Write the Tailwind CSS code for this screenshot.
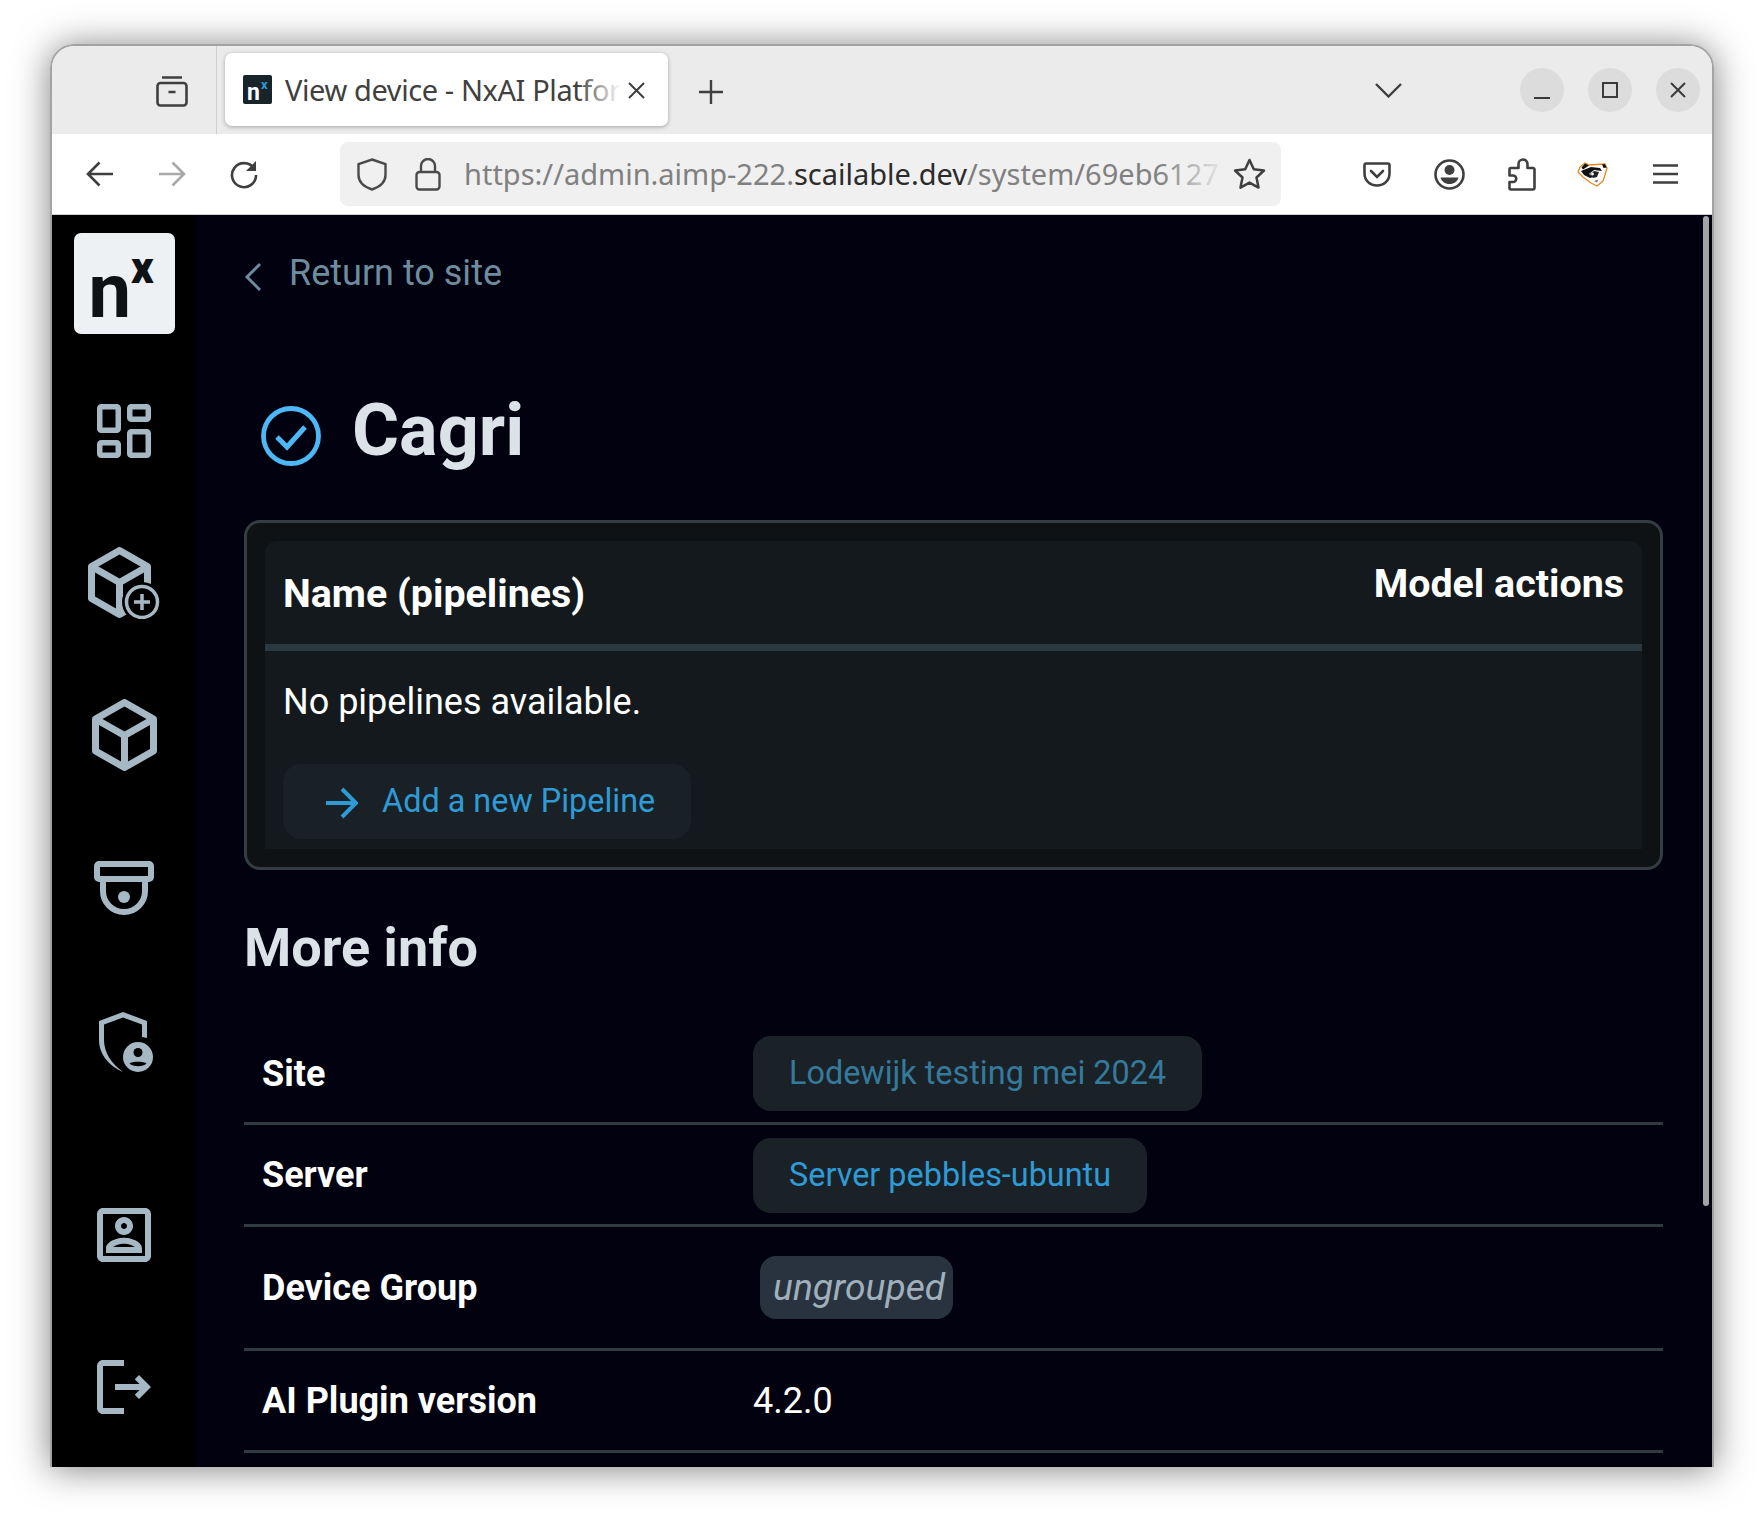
<!DOCTYPE html>
<html lang="en">
<head>
    <meta charset="UTF-8">
    <meta name="viewport" content="width=device-width, initial-scale=1.0">
    <title>View device - NxAI Platform</title>
    <script src="https://cdn.jsdelivr.net/npm/@tailwindcss/browser@4"></script>
</head>
<body class="bg-white h-[1524px] overflow-hidden pt-[44px] pl-[50px]">
    <div class="w-[1664px] h-[1423px] rounded-t-[24px] overflow-hidden flex flex-col border-x-2 border-t-2 border-[#a3a3a3] shadow-[0_2px_36px_rgba(0,0,0,0.5)]">

        <!-- tab strip -->
        <div class="h-[88px] shrink-0 bg-[#ebebeb] flex items-start font-['Noto_Sans',sans-serif] text-[#3d3d3d]">
            <div class="w-[165px] h-full shrink-0 border-r border-[#cfcfcf] pl-[104px] pt-[29px]">
                <svg class="w-[32px] h-[32px]" viewBox="0 0 32 32" fill="none" stroke="#3f3f3f" stroke-width="2.6">
                    <path d="M6 2.5h20"></path>
                    <rect x="1.5" y="8" width="29" height="22.5" rx="3"></rect>
                    <path d="M12.5 17h7"></path>
                </svg>
            </div>
            <div class="relative w-[443px] h-[73px] mt-[7px] ml-[8px] shrink-0 bg-white rounded-[7px] shadow-[0_1px_4px_rgba(0,0,0,0.3)] flex items-center pl-[18px]">
                <div class="w-[29px] h-[29px] shrink-0 rounded-[2px] bg-[#17252b] relative font-['Roboto',sans-serif] font-bold leading-none">
                    <span class="absolute left-[4px] top-[6px] text-[23px] text-white">n</span>
                    <span class="absolute left-[18px] top-[3px] text-[13px] text-[#2e9bd6]">x</span>
                </div>
                <span class="ml-[13px] whitespace-nowrap text-[29px] text-[#404040] tracking-[-0.4px]">View device - NxAI Platfor</span>
                <div class="absolute left-[352px] top-[10px] w-[44px] h-[50px] bg-gradient-to-r from-white/0 to-white"></div>
                <svg class="absolute left-[403px] top-[29px] w-[17px] h-[17px]" viewBox="0 0 17 17" stroke="#3f3f3f" stroke-width="2"><path d="M1 1l15 15M16 1L1 16"></path></svg>
            </div>
            <svg class="ml-[31px] mt-[34px] w-[24px] h-[24px] shrink-0" viewBox="0 0 24 24" stroke="#3f3f3f" stroke-width="2.4"><path d="M12 0v24M0 12h24"></path></svg>
            <svg class="ml-[652px] mt-[37px] w-[27px] h-[15px] shrink-0" viewBox="0 0 27 15" fill="none" stroke="#3f3f3f" stroke-width="2.4"><path d="M1 1l12.5 12.5L26 1"></path></svg>
            <div class="ml-[118px] mt-[22px] flex gap-[24px] shrink-0">
                <div class="w-[44px] h-[44px] rounded-full bg-[#dcdcdc] flex items-center justify-center">
                    <div class="w-[16px] h-[2px] mt-[15px] bg-[#3a3a3a]"></div>
                </div>
                <div class="w-[44px] h-[44px] rounded-full bg-[#dcdcdc] flex items-center justify-center">
                    <div class="w-[16px] h-[16px] border-2 border-[#3a3a3a]"></div>
                </div>
                <div class="w-[44px] h-[44px] rounded-full bg-[#dcdcdc] flex items-center justify-center">
                    <svg class="w-[16px] h-[16px]" viewBox="0 0 16 16" stroke="#3a3a3a" stroke-width="2"><path d="M1 1l14 14M15 1L1 15"></path></svg>
                </div>
            </div>
        </div>

        <!-- toolbar -->
        <div class="h-[81px] shrink-0 bg-white border-b border-[#cfcfcf] flex items-center font-['Noto_Sans',sans-serif]">
            <svg class="ml-[34px] w-[28px] h-[26px] shrink-0" viewBox="0 0 28 26" fill="none" stroke="#3f3f3f" stroke-width="2.6"><path d="M27 13H3M13.5 1.5L2 13l11.5 11.5"></path></svg>
            <svg class="ml-[43px] w-[30px] h-[26px] shrink-0" viewBox="0 0 28 26" fill="none" stroke="#a9a9a9" stroke-width="2.6"><path d="M1 13h24M14.5 1.5L26 13 14.5 24.5"></path></svg>
            <svg class="ml-[42px] w-[30px] h-[30px] shrink-0" viewBox="0 0 30 30" fill="none" stroke="#3f3f3f" stroke-width="2.6"><path d="M25 9.5A12 12 0 1 0 27 16"></path><path d="M27 2v10H17z" fill="#3f3f3f" stroke="none"></path></svg>
            <div class="relative ml-[81px] w-[941px] h-[64px] shrink-0 bg-[#f0f0f0] rounded-[8px] flex items-center">
                <svg class="ml-[17px] w-[30px] h-[33px] shrink-0" viewBox="0 0 30 33" fill="none" stroke="#4a4a4a" stroke-width="2.4"><path d="M15 1.5L28.5 6v11c0 7-6 12-13.500 14.500C7.500 29 1.500 24 1.500 17V6z"></path></svg>
                <svg class="ml-[28px] w-[26px] h-[33px] shrink-0" viewBox="0 0 26 33" fill="none" stroke="#4a4a4a" stroke-width="2.4"><rect x="1.500" y="14" width="23" height="17.500" rx="3"></rect><path d="M6 14V8a7 7 0 0 1 14 0v6"></path></svg>
                <div class="ml-[23px] whitespace-nowrap text-[29px] text-[#808080]">https://admin.aimp-222.<span class="text-[#2b2b2b]">scailable.dev</span>/system/69eb6127</div>
                <div class="absolute left-[820px] top-[8px] w-[66px] h-[48px] bg-gradient-to-r from-[#f0f0f0]/0 to-[#f0f0f0]"></div>
                <svg class="absolute left-[893px] top-[16px] w-[33px] h-[32px]" viewBox="0 0 33 32" fill="none" stroke="#3f3f3f" stroke-width="2.500" stroke-linejoin="round"><path d="M16.500 2l4.300 9.300 10.200 1.200-7.500 7 2 10.100-9-5-9 5 2-10.100-7.500-7 10.200-1.200z"></path></svg>
            </div>
            <svg class="ml-[82px] w-[28px] h-[25px] shrink-0" viewBox="0 0 28 25" fill="none" stroke="#3f3f3f" stroke-width="2.600"><path d="M3 1.500h22a1.500 1.500 0 0 1 1.500 1.500v8.500C26.500 18.500 21 23.500 14 23.500S1.500 18.500 1.500 11.500V3A1.500 1.500 0 0 1 3 1.500z"></path><path d="M8 9l6 6 6-6" stroke-linecap="round"></path></svg>
            <svg class="ml-[43px] w-[31px] h-[31px] shrink-0" viewBox="0 0 31 31"><circle cx="15.500" cy="15.500" r="14" fill="none" stroke="#3f3f3f" stroke-width="2.600"></circle><circle cx="15.500" cy="11" r="5" fill="#3f3f3f"></circle><path d="M6.500 18.500h18c-1 4-4.500 6.500-9 6.500s-8-2.500-9-6.500z" fill="#3f3f3f"></path></svg>
            <svg class="ml-[43px] w-[28px] h-[33px] shrink-0" viewBox="0 0 28 33" fill="none" stroke="#3f3f3f" stroke-width="2.600" stroke-linejoin="round"><path d="M3 31.500h22a1.500 1.500 0 0 0 1.500-1.500V11.500a1.500 1.500 0 0 0-1.500-1.500h-5.500V6a4.500 4.500 0 0 0-9 0v4H3a1.500 1.500 0 0 0-1.500 1.500v6h3.500a3 3 0 0 1 0 6.500H1.500V30A1.500 1.500 0 0 0 3 31.500z"></path></svg>
            <svg class="ml-[41px] w-[33px] h-[27px] shrink-0" viewBox="0 0 33 27">
                <path d="M8 2l4 2 16-1 2 4-2 7-2 6-6 5-6-3-8-6-5-5 2-5z" fill="#fff" stroke="#e8871e" stroke-width="1.300" stroke-linejoin="round"></path>
                <path d="M8 2.500l4 2-6 4-1.500-2z" fill="#111"></path>
                <path d="M25 3.500l3-.5 1.500 3.500-3 .5z" fill="#111"></path>
                <path d="M4 10l10-4 9 1 2 3-8-1-5 4 4 3-3 1-6-3z" fill="#111"></path>
                <path d="M13 13l4-3 5 1-2 5-4 1z" fill="#222"></path>
                <circle cx="15.500" cy="13" r="1.400" fill="#fff"></circle>
                <path d="M17 20l3 1.500 1.500-3z" fill="#777"></path>
            </svg>
            <svg class="ml-[43px] w-[25px] h-[20px] shrink-0" viewBox="0 0 25 20" stroke="#3f3f3f" stroke-width="2.500"><path d="M0 1.500h25M0 10h25M0 18.500h25"></path></svg>
        </div>

        <!-- page -->
        <div class="flex-1 min-h-0 flex bg-[#01010f] font-['Roboto',sans-serif]">
            <aside class="w-[144px] shrink-0 bg-black flex flex-col items-center text-[#a5b8c4]">
                <div class="mt-[18px] w-[101px] h-[101px] shrink-0 rounded-[7px] bg-[#eef1f4] flex pl-[15px] text-[#0e1214] leading-none">
                    <span class="text-[76px] mt-[20px] font-bold">n</span>
                    <span class="text-[44px] mt-[13px] font-black">x</span>
                </div>
                <svg class="mt-[70px] w-[54px] h-[54px] shrink-0" viewBox="0 0 54 54" fill="none" stroke="#a5b8c4" stroke-width="5.500">
                    <rect x="2.750" y="2.750" width="18.500" height="23.500" rx="1.500"></rect>
                    <rect x="32.750" y="2.750" width="18.500" height="12.500" rx="1.500"></rect>
                    <rect x="2.750" y="38.750" width="18.500" height="12.500" rx="1.500"></rect>
                    <rect x="32.750" y="27.750" width="18.500" height="23.500" rx="1.500"></rect>
                </svg>
                <svg class="mt-[89px] w-[72px] h-[72px] shrink-0" viewBox="0 0 72 72">
                    <g fill="none" stroke="#a5b8c4" stroke-width="7" stroke-linejoin="round">
                        <path d="M31.500 3.500L59.500 19.500v32L31.500 67.500 3.500 51.500v-32z"></path>
                        <path d="M3.500 19.500l28 16 28-16M31.500 35.500v32"></path>
                    </g>
                    <circle cx="54" cy="55" r="20" fill="#000"></circle>
                    <circle cx="54" cy="55" r="15.500" fill="none" stroke="#a5b8c4" stroke-width="3.500"></circle>
                    <path d="M54 47v16M46 55h16" stroke="#a5b8c4" stroke-width="3.500"></path>
                </svg>
                <svg class="mt-[80px] w-[65px] h-[72px] shrink-0" viewBox="0 0 65 72" fill="none" stroke="#a5b8c4" stroke-width="7" stroke-linejoin="round">
                    <path d="M32.500 3.500L61.500 20v32L32.500 68.500 3.500 52V20z"></path>
                    <path d="M3.500 20l29 16.500 29-16.500M32.500 36.500v32"></path>
                </svg>
                <svg class="mt-[90px] w-[60px] h-[54px] shrink-0" viewBox="0 0 60 54" fill="none" stroke="#a5b8c4" stroke-width="6">
                    <rect x="3" y="3" width="54" height="15" rx="2"></rect>
                    <path d="M9 20v10a21 21 0 0 0 42 0V20"></path>
                    <circle cx="30" cy="36" r="6" fill="#a5b8c4" stroke="none"></circle>
                </svg>
                <svg class="mt-[97px] w-[54px] h-[60px] shrink-0 translate-x-[2px]" viewBox="0 0 54 60">
                    <path d="M24 0L48 9V26L43 25V12.500L24 5.500 5 12.500V28C5 41 13 52 24 60 10 54 0 42 0 28V9z" fill="#a5b8c4"></path>
                    <circle cx="39" cy="45" r="15" fill="#a5b8c4"></circle>
                    <circle cx="39" cy="40.500" r="4.500" fill="#000"></circle>
                    <path d="M30.500 51.500c2-2.500 15-2.500 17 0-3.500 3.500-13.500 3.500-17 0z" fill="#000"></path>
                </svg>
                <svg class="mt-[127px] w-[72px] h-[72px] shrink-0" viewBox="0 0 24 24" fill="#a5b8c4"><path d="M19 5v14H5V5h14m0-2H5c-1.100 0-2 .9-2 2v14c0 1.100.9 2 2 2h14c1.100 0 2-.9 2-2V5c0-1.100-.9-2-2-2zm-7 9c-1.650 0-3-1.350-3-3s1.350-3 3-3 3 1.350 3 3-1.350 3-3 3zm0-4c-.55 0-1 .45-1 1s.45 1 1 1 1-.45 1-1-.45-1-1-1zm6 10H6v-1.530c0-2.500 3.970-3.580 6-3.580s6 1.080 6 3.580V18zm-9.690-2h7.380c-.69-.56-2.380-1.120-3.690-1.120s-3.010.56-3.690 1.120z"></path></svg>
                <svg class="mt-[80px] w-[72px] h-[72px] shrink-0" viewBox="0 0 24 24" fill="#a5b8c4"><path d="M17 8l-1.410 1.410L17.170 11H9v2h8.170l-1.580 1.580L17 16l4-4-4-4zM5 5h7V3H5c-1.100 0-2 .9-2 2v14c0 1.100.9 2 2 2h7v-2H5V5z"></path></svg>
            </aside>

            <main class="flex-1 min-w-0 pl-[48px] pr-[40px] overflow-hidden">
                <a class="mt-[31px] h-[54px] flex items-center text-[36px] text-[#6f8c9e]">
                    <svg class="w-[18px] h-[30px] mt-[8px] shrink-0" viewBox="0 0 18 30" fill="none" stroke="#6f8c9e" stroke-width="3"><path d="M16 2L3 15l13 13"></path></svg>
                    <span class="ml-[27px]">Return to site</span>
                </a>

                <div class="mt-[79px] h-[100px] flex items-start">
                    <svg class="ml-[17px] mt-[27px] w-[60px] h-[60px] shrink-0" viewBox="0 0 60 60" fill="none" stroke="#4cb8f5"><circle cx="30" cy="30" r="27.500" stroke-width="4.800"></circle><path d="M16 31l10 10 18-20" stroke-width="5"></path></svg>
                    <h1 class="ml-[31px] mt-[2px] text-[72px] leading-[100px] font-bold text-[#dbe2e8]">Cagri</h1>
                </div>

                <div class="mt-[41px] h-[350px] border-[3px] border-[#343d42] rounded-[16px] bg-[#0e1214] p-[18px]">
                    <div class="h-[308px] rounded-t-[12px] bg-[#13191c]">
                        <div class="h-[110px] border-b-[7px] border-[#2a393f] flex justify-between px-[18px] font-bold text-white text-[39.4px]">
                            <span class="mt-[23px]">Name (pipelines)</span>
                            <span class="mt-[13px]">Model actions</span>
                        </div>
                        <p class="mx-[18px] mt-[30px] h-[42px] text-[36px] text-white leading-[42px]">No pipelines available.</p>
                        <a class="ml-[18px] mt-[41px] w-[408px] h-[75px] rounded-[18px] bg-[#192127] flex items-center pl-[43px] text-[32.4px] text-[#2e9bd6]">
                            <svg class="w-[32px] h-[32px] mt-[3px] shrink-0" viewBox="0 0 32 32" fill="none" stroke="#2e9bd6" stroke-width="4"><path d="M0 16h30M16 2l14 14-14 14"></path></svg>
                            <span class="ml-[24px]">Add a new Pipeline</span>
                        </a>
                    </div>
                </div>

                <h2 class="mt-[40px] h-[76px] text-[54px] font-bold text-[#dbe2e8] leading-[76px]">More info</h2>

                <div class="mt-[37px] text-white text-[36px]">
                    <div class="grid grid-cols-[509px_1fr] items-center h-[102px] border-b-[3px] border-[#2f3b41]">
                        <span class="pl-[18px] pt-[2px] font-bold">Site</span>
                        <div class="pt-[1px]"><a class="inline-flex items-center h-[75px] px-[36px] rounded-[18px] bg-[#1a2227] text-[32.4px] text-[#357a9c]">Lodewijk testing mei 2024</a></div>
                    </div>
                    <div class="grid grid-cols-[509px_1fr] items-center h-[102px] border-b-[3px] border-[#2f3b41]">
                        <span class="pl-[18px] font-bold">Server</span>
                        <div class="pt-[1px]"><a class="inline-flex items-center h-[75px] px-[36px] rounded-[18px] bg-[#1a2227] text-[32.4px] text-[#2e9bd6]">Server pebbles-ubuntu</a></div>
                    </div>
                    <div class="grid grid-cols-[509px_1fr] items-center h-[124px] border-b-[3px] border-[#2f3b41]">
                        <span class="pl-[18px] font-bold">Device Group</span>
                        <div class="pl-[7px]"><span class="inline-flex items-center h-[63px] pl-[13px] pr-[8px] rounded-[16px] bg-[#28333f] italic text-[37.2px] text-[#9fb0bb]">ungrouped</span></div>
                    </div>
                    <div class="grid grid-cols-[509px_1fr] items-center h-[102px] border-b-[3px] border-[#2f3b41]">
                        <span class="pl-[18px] font-bold">AI Plugin version</span>
                        <span>4.2.0</span>
                    </div>
                </div>
            </main>

            <!-- scrollbar -->
            <div class="w-[9px] shrink-0 pt-[1px]">
                <div class="w-[6px] h-[990px] rounded-full bg-[#a3a3a8]"></div>
            </div>
        </div>
    </div>
</body>
</html>
